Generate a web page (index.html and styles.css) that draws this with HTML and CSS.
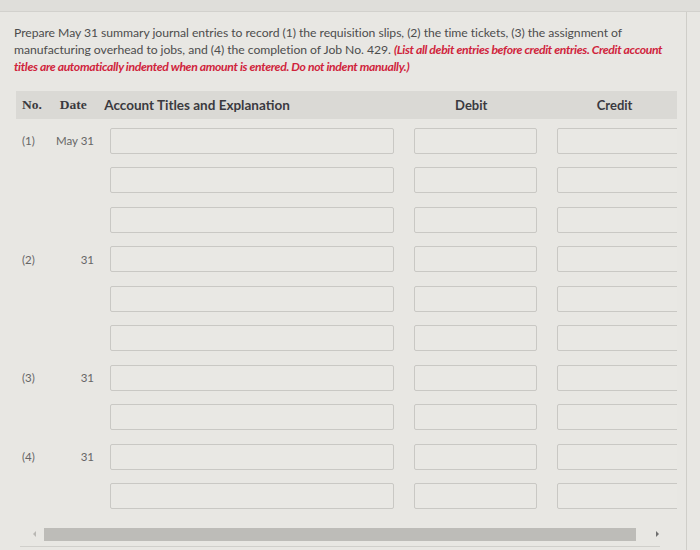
FILE: index.html
```html
<!DOCTYPE html>
<html>
<head>
<meta charset="utf-8">
<link rel="stylesheet" href="styles.css">
</head>
<body>
<div class="topband"></div>
<div class="panel">
  <p class="prompt">Prepare May 31 summary journal entries to record (1) the requisition slips, (2) the time tickets, (3) the assignment of manufacturing overhead to jobs, and (4) the completion of Job No. 429. <span class="note">(List all debit entries before credit entries. Credit account titles are automatically indented when amount is entered. Do not indent manually.)</span></p>

  <div class="journal">
    <div class="head">
      <div class="h-no">No.</div>
      <div class="h-date">Date</div>
      <div class="h-acct">Account Titles and Explanation</div>
      <div class="h-debit">Debit</div>
      <div class="h-credit">Credit</div>
    </div>
    <div class="rows">
      <div class="row"><div class="c-no">(1)</div><div class="c-date">May 31</div><div class="in acct"></div><div class="in debit"></div><div class="in credit"></div></div>
      <div class="row"><div class="c-no"></div><div class="c-date"></div><div class="in acct"></div><div class="in debit"></div><div class="in credit"></div></div>
      <div class="row"><div class="c-no"></div><div class="c-date"></div><div class="in acct"></div><div class="in debit"></div><div class="in credit"></div></div>
      <div class="row"><div class="c-no">(2)</div><div class="c-date">31</div><div class="in acct"></div><div class="in debit"></div><div class="in credit"></div></div>
      <div class="row"><div class="c-no"></div><div class="c-date"></div><div class="in acct"></div><div class="in debit"></div><div class="in credit"></div></div>
      <div class="row"><div class="c-no"></div><div class="c-date"></div><div class="in acct"></div><div class="in debit"></div><div class="in credit"></div></div>
      <div class="row"><div class="c-no">(3)</div><div class="c-date">31</div><div class="in acct"></div><div class="in debit"></div><div class="in credit"></div></div>
      <div class="row"><div class="c-no"></div><div class="c-date"></div><div class="in acct"></div><div class="in debit"></div><div class="in credit"></div></div>
      <div class="row"><div class="c-no">(4)</div><div class="c-date">31</div><div class="in acct"></div><div class="in debit"></div><div class="in credit"></div></div>
      <div class="row"><div class="c-no"></div><div class="c-date"></div><div class="in acct"></div><div class="in debit"></div><div class="in credit"></div></div>
    </div>
    <div class="scrollbar">
      <span class="arrow left"></span>
      <div class="thumb"></div>
      <span class="arrow right"></span>
    </div>
  </div>
  <div class="bottomline"></div>
</div>
</body>
</html>
```

FILE: styles.css
```css
html, body {
  margin: 0;
  padding: 0;
}
body {
  width: 700px;
  height: 550px;
  overflow: hidden;
  background: #e8e7e3;
  font-family: Lato, "Open Sans", sans-serif;
  color: #4a4a4a;
}
.topband {
  height: 11px;
  background: #dfdeda;
  border-bottom: 1px solid #d2d1cd;
}
.panel {
  width: 687px;
  height: 538px;
  border-right: 1px solid #cfcec9;
  box-sizing: border-box;
  overflow: hidden;
}
.prompt {
  margin: 12px 20px 0 14px;
  font-size: 12.2px;
  line-height: 17px;
  letter-spacing: -0.05px;
  color: #4d4d4d;
}
.note {
  color: #d0243c;
  font-weight: bold;
  font-style: italic;
  letter-spacing: -0.35px;
}
.journal {
  margin: 16px 0 0 16px;
  width: 661px;
}
.head {
  display: flex;
  align-items: center;
  height: 28px;
  background: #dad9d5;
  font-family: "Liberation Serif", serif;
  font-weight: bold;
  font-size: 13.5px;
  color: #3a3a40;
}
.h-no { width: 44px; padding-left: 6px; box-sizing: border-box; }
.h-date { width: 45px; }
.h-acct { width: 309px; font-family: Lato, sans-serif; font-size: 13.5px; }
.h-debit { width: 123px; text-align: center; font-family: Lato, sans-serif; font-size: 13px; }
.h-credit { width: 126px; margin-left: 20px; text-align: center; font-family: Lato, sans-serif; font-size: 13px; }
.rows {
  padding-top: 2px;
  overflow: hidden;
  height: 404px;
  box-sizing: border-box;
}
.row {
  display: flex;
  align-items: center;
  height: 39.5px;
  font-size: 11.5px;
  color: #666;
}
.row > div { flex: none; }
.c-no { width: 34px; padding-left: 6px; box-sizing: border-box; }
.c-date { width: 44px; text-align: right; }
.in {
  height: 24px;
  border: 1px solid #c9c8c4;
  border-radius: 2px;
  background: #e9e8e4;
  box-sizing: content-box;
}
.acct { width: 282px; margin-left: 16px; }
.debit { width: 121px; margin-left: 20px; }
.credit { width: 130px; margin-left: 20px; }
.scrollbar {
  display: flex;
  align-items: center;
  height: 14px;
  margin-top: 4px;
  margin-left: 12px;
  width: 650px;
}
.arrow {
  width: 0;
  height: 0;
  border-top: 3px solid transparent;
  border-bottom: 3px solid transparent;
  flex: none;
}
.arrow.left { border-right: 3px solid #b9b8b4; margin-right: 8px; margin-left: 5px; }
.arrow.right { border-left: 3px solid #6f6f6f; margin-left: 20px; }
.thumb {
  width: 592px;
  height: 13px;
  background: #bdbcb8;
}
.bottomline {
  margin: 5px 0 0 20px;
  width: 640px;
  border-top: 1px solid #d0cfcb;
}
```
